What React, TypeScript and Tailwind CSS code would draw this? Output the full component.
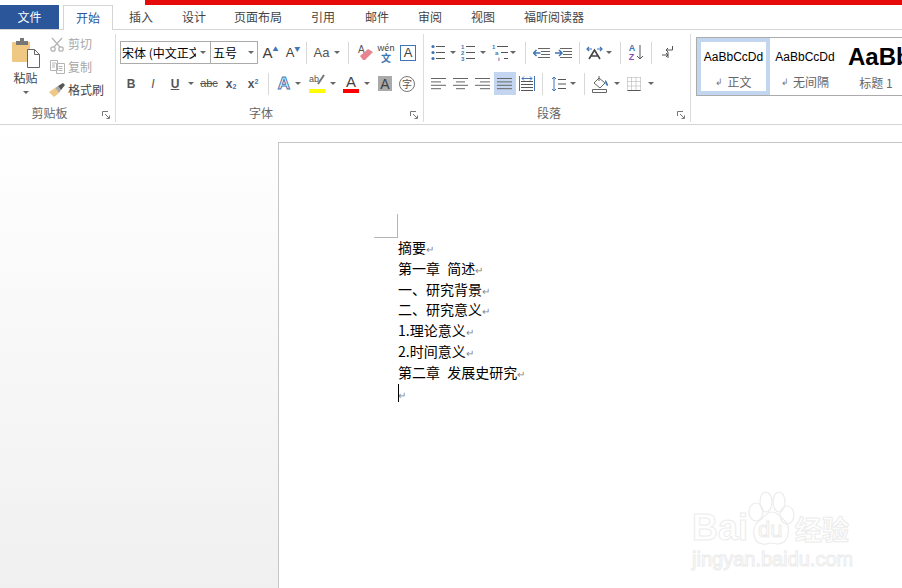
import type { ReactNode } from "react";

const ui = "font-['Noto_Sans_CJK_SC','Liberation_Sans',sans-serif]";
const latin = "font-['Liberation_Sans',sans-serif]";

const tabs = [
  { label: "插入", w: "w-[56px]" },
  { label: "设计", w: "w-[50px]" },
  { label: "页面布局", w: "w-[78px]" },
  { label: "引用", w: "w-[52px]" },
  { label: "邮件", w: "w-[56px]" },
  { label: "审阅", w: "w-[50px]" },
  { label: "视图", w: "w-[56px]" },
  { label: "福昕阅读器", w: "w-[86px]" },
];

const docLines = ["摘要", "第一章  简述", "一、研究背景", "二、研究意义", "1.理论意义", "2.时间意义", "第二章  发展史研究"];

function Caret() {
  return <span className="inline-block h-0 w-0 border-x-[3px] border-t-[3px] border-x-transparent border-t-[#666]" />;
}

function Btn({ w, children, active }: { w: string; children: ReactNode; active?: boolean }) {
  return <div className={`flex h-[23px] shrink-0 items-center justify-center ${w} ${active ? "bg-[#c3d5f0]" : ""}`}>{children}</div>;
}

function CaretBtn({ ml }: { ml: string }) {
  return <Btn w={`w-[6px] ${ml}`}><Caret /></Btn>;
}

function Sep({ className = "" }: { className?: string }) {
  return <div className={`h-[22px] w-px shrink-0 bg-[#d8d8d8] ${className}`} />;
}

function Launcher() {
  return (
    <svg width="8" height="8" viewBox="0 0 8 8" className="absolute bottom-[3px] right-[5px]" fill="none" stroke="#777">
      <path d="M.5 5V.5H6M3 3l4 4M4.5 7.5h3v-3" />
    </svg>
  );
}

function GroupLabel({ w, label, mt }: { w: string; label: string; mt: string }) {
  return <div className={`${w} ${mt} text-center text-[12px] leading-[18px] text-[#666]`}>{label}</div>;
}

function Lines({ rows }: { rows: [number, number][] }) {
  return (
    <svg width="16" height="13" viewBox="0 0 16 13" stroke="#666">
      {rows.map(([a, b], i) => (
        <path key={i} d={`M${a} ${i * 3.4 + 1.5}H${b}`} />
      ))}
    </svg>
  );
}

function ListIcon({ kind }: { kind: "bullet" | "number" | "multi" }) {
  const line = kind === "multi" ? "M5 2.5H16M9 8.5H16M12 14.5H16" : "M5 2.5H14M5 8.5H14M5 14.5H14";
  return (
    <svg width="16" height="17" viewBox="0 0 16 17">
      {kind === "bullet" && (
        <g fill="#3f75b5">
          <circle cx="2" cy="2.5" r="1.6" />
          <circle cx="2" cy="8.5" r="1.6" />
          <circle cx="2" cy="14.5" r="1.6" />
        </g>
      )}
      {kind !== "bullet" && (
        <g fill="#3f75b5" fontSize="6" fontWeight="700" fontFamily="Liberation Sans">
          <text x="0" y="5">1</text>
          <text x={kind === "multi" ? 3 : 0} y="11">{kind === "multi" ? "a" : "2"}</text>
          <text x={kind === "multi" ? 6 : 0} y="17">{kind === "multi" ? "i" : "3"}</text>
        </g>
      )}
      <path d={line} stroke="#555" />
    </svg>
  );
}

function IndentIcon({ flip }: { flip?: boolean }) {
  return (
    <svg width="17" height="12" viewBox="0 0 17 12" fill="none">
      <path d="M5 1.5H17M8 4.5H17M8 7.5H17M5 10.5H17" stroke="#666" />
      <path d={flip ? "M0 6H7M4 3l3 3-3 3" : "M0.5 6H7.5M3.5 3L.5 6l3 3"} stroke="#3f75b5" strokeWidth="1.5" />
    </svg>
  );
}

function Paste() {
  return (
    <svg width="28" height="30" viewBox="0 0 28 30">
      <path d="M1 4h17v20H1a1 1 0 0 1-1-1V5a1 1 0 0 1 1-1z" fill="#efc883" />
      <path d="M4 3h4V0h4v3h4v4H4z" fill="#777" />
      <path d="M15.5 11.5h7l5 5v13h-12z" fill="#fff" stroke="#666" />
      <path d="M22.5 11.5v5h5" fill="none" stroke="#666" />
    </svg>
  );
}

function Brush() {
  return (
    <svg width="16" height="14" viewBox="0 0 16 14">
      <path d="M0 9l6-4 4 5-5 4z" fill="#efc883" />
      <path d="M6 5l3-2 3 4-2 3z" fill="#aaa" />
      <path d="M9 3l5-3 2 2-4 5z" fill="#555" />
    </svg>
  );
}

function Scissors() {
  return (
    <svg width="14" height="15" viewBox="0 0 14 15" fill="none" stroke="#b5b5b5" strokeWidth="1.3">
      <path d="M2 1l8 9M12 1L4 10" />
      <circle cx="3" cy="12" r="2.2" />
      <circle cx="11" cy="12" r="2.2" />
    </svg>
  );
}

function Copy() {
  return (
    <svg width="15" height="14" viewBox="0 0 15 14" fill="#fff" stroke="#b5b5b5">
      <path d="M.5.5h7v10h-7zM6.5 3.5h8v10h-8zM8.5 6.5h4M8.5 8.5h4M8.5 10.5h4M2 3h4M2 5h3M2 7h3" />
    </svg>
  );
}

function Eraser() {
  return (
    <svg width="15" height="17" viewBox="0 0 15 17">
      <text x="0" y="9" fontSize="10" fill="#555" fontFamily="Liberation Sans">A</text>
      <path d="M2 12l8-7 5 3-8 8H5z" fill="#e8848f" />
    </svg>
  );
}

function PaintBucket() {
  return (
    <svg width="17" height="18" viewBox="0 0 17 18" fill="none" stroke="#666">
      <path d="M2 8l5-5 6 5-5 5z" fill="#fff" />
      <path d="M7 1v5" />
      <path d="M13 5c2 1 3 4 3 6-2 0-3-3-3-6z" fill="#3f75b5" stroke="none" />
      <path d="M.5 14.5h14v3H.5z" />
    </svg>
  );
}

function BorderGrid() {
  return (
    <svg width="14" height="14" viewBox="0 0 14 14" fill="none" stroke="#aaa" strokeDasharray="1 1">
      <path d="M.5.5h13M.5 4.5h13M.5 9h13M.5.5v13M4.5.5v13M9 .5v13M13.5.5v13" />
      <path d="M.5 13.5h13" strokeDasharray="none" stroke="#555" />
    </svg>
  );
}

function TextDirection() {
  return (
    <svg width="17" height="14" viewBox="0 0 17 14" fill="none">
      <path d="M3 13L8.5 4 14 13M5 10h7" stroke="#444" strokeWidth="1.6" />
      <path d="M1 3h5M3 1L1 3l2 2M16 3h-5M14 1l2 2-2 2" stroke="#3f75b5" strokeWidth="1.2" />
    </svg>
  );
}

function Pilcrow() {
  return (
    <svg width="11" height="13" viewBox="0 0 11 13" fill="none" stroke="#555">
      <path d="M10.5 0v4H4M6 2L4 4l2 2" />
      <path d="M0 9h6M4 7l2 2-2 2M6 6v6" />
    </svg>
  );
}

function Row({ children, className = "" }: { children: ReactNode; className?: string }) {
  return <div className={`flex h-[23px] items-center ${className}`}>{children}</div>;
}

function BigA({ color = "#3f3f3f", size = "text-[15px]" }: { color?: string; size?: string }) {
  return <span className={`${size} leading-none ${latin}`} style={{ color }}>A</span>;
}

function StyleCard({ sample, name, mark, selected, w, left }: { sample: ReactNode; name: string; mark?: boolean; selected?: boolean; w: string; left?: boolean }) {
  return (
    <div className={`flex h-full shrink-0 flex-col items-center overflow-hidden border-[4px] ${w} ${selected ? "border-[#c3d6f0]" : "border-transparent"}`}>
      <div className={`flex h-[30px] items-center ${left ? "ml-[4px] self-start" : ""}`}>{sample}</div>
      <div className="mt-[2px] flex items-center whitespace-nowrap text-[12px] leading-[18px] text-[#666]">
        {mark && <span className="mr-[4px] text-[9px] text-[#777]">↲</span>}
        {name}
      </div>
    </div>
  );
}

export default function App() {
  return (
    <div className={`relative flex h-[588px] w-[902px] flex-col overflow-hidden bg-white ${ui}`}>
      {/* Title strip */}
      <div className="ml-[145px] h-[5px] shrink-0 bg-[#e60a0a]" />

      {/* Tabs */}
      <div className="relative flex h-[25px] shrink-0 items-stretch border-b border-[#d4d4d4] text-[12px] text-[#444]">
        <div className="flex w-[59px] items-center justify-center bg-[#2b579a] text-white">文件</div>
        <div className="z-10 mb-[-1px] ml-[4px] flex w-[50px] items-center justify-center border border-b-0 border-[#d4d4d4] bg-white text-[#2b579a]">开始</div>
        {tabs.map((t) => (
          <div key={t.label} className={`flex items-center justify-center ${t.w}`}>{t.label}</div>
        ))}
      </div>

      {/* Ribbon */}
      <div className="flex h-[95px] shrink-0 border-b border-[#d4d4d4] pb-[2px] pt-[4px]">
        {/* Clipboard */}
        <section className="relative flex w-[116px] shrink-0 flex-col border-r border-[#dcdcdc]">
          <div className="flex h-[70px]">
            <div className="flex w-[48px] flex-col items-center pl-[3px] pt-[4px]">
              <Paste />
              <span className="mt-[2px] text-[12px] leading-[16px] text-[#444]">粘贴</span>
              <span className="mt-[5px] flex"><Caret /></span>
            </div>
            <div className="mt-[-1px] flex flex-col gap-[1px] pl-[1px] text-[12px] text-[#444]">
              <div className="flex h-[22px] items-center gap-[3px] text-[#a8a8a8]"><span className="flex w-[16px] justify-center"><Scissors /></span>剪切</div>
              <div className="flex h-[22px] items-center gap-[3px] text-[#a8a8a8]"><span className="flex w-[16px] justify-center"><Copy /></span>复制</div>
              <div className="flex h-[22px] items-center gap-[3px]"><span className="flex w-[16px] justify-center"><Brush /></span>格式刷</div>
            </div>
          </div>
          <GroupLabel w="w-[99px]" mt="" label="剪贴板" />
          <Launcher />
        </section>

        {/* Font */}
        <section className="relative flex w-[308px] shrink-0 flex-col border-r border-[#dcdcdc] pl-[4px] pt-[7px]">
          <Row>
            <div className="flex h-[23px] w-[91px] shrink-0 items-center justify-between border border-[#ababab] pl-[1px] pr-[4px] text-[12px] text-black">
              <span className="w-[74px] overflow-hidden whitespace-nowrap">宋体 (中文正文)</span>
              <Caret />
            </div>
            <div className="flex h-[23px] w-[47px] shrink-0 items-center justify-between border border-l-0 border-[#ababab] pl-[2px] pr-[3px] text-[12px] text-black">
              五号 <Caret />
            </div>
            <Btn w="w-[23px] ml-[1px]"><BigA /><span className="mb-[8px] text-[6px] leading-none text-[#3f75b5]">▲</span></Btn>
            <Btn w="w-[22px]"><BigA size="text-[13px]" /><span className="mb-[8px] text-[6px] leading-none text-[#3f75b5]">▼</span></Btn>
            <Sep className="ml-[2px]" />
            <Btn w="w-[23px] ml-[3px]"><span className={`text-[13px] leading-none text-[#555] ${latin}`}>Aa</span></Btn>
            <CaretBtn ml="ml-[1px]" />
            <Sep className="ml-[8px]" />
            <Btn w="w-[22px] ml-[5px]"><Eraser /></Btn>
            <Btn w="w-[20px]">
              <div className="flex flex-col items-center gap-[1px]">
                <span className="text-[9px] leading-[9px] text-[#444]">wén</span>
                <span className="text-[10px] font-bold leading-[10px] text-[#3f75b5]">文</span>
              </div>
            </Btn>
            <Btn w="w-[22px] ml-[1px]">
              <div className="flex h-[16px] w-[16px] items-center justify-center border border-[#3f75b5]"><BigA size="text-[13px]" /></div>
            </Btn>
          </Row>
          <Row className={`mt-[8px] text-[#555] ${latin}`}>
            <Btn w="w-[22px]"><span className="text-[12px] font-bold">B</span></Btn>
            <Btn w="w-[22px]"><span className="text-[12px] italic">I</span></Btn>
            <Btn w="w-[22px]"><span className="text-[12px] font-bold underline">U</span></Btn>
            <CaretBtn ml="ml-[2px]" />
            <Btn w="w-[22px] ml-[4px]"><span className="text-[11px] line-through">abc</span></Btn>
            <Btn w="w-[22px]"><span className="text-[12px] font-bold">x<sub className="text-[7px] text-[#3f75b5]">2</sub></span></Btn>
            <Btn w="w-[22px]"><span className="text-[12px] font-bold">x<sup className="text-[7px] text-[#3f75b5]">2</sup></span></Btn>
            <Sep className="ml-[4px]" />
            <Btn w="w-[22px] ml-[4px]"><span className="text-[17px] font-bold text-white [-webkit-text-stroke:1px_#3f75b5]">A</span></Btn>
            <CaretBtn ml="" />
            <Btn w="w-[22px] ml-[5px]">
              <div className="relative flex h-[19px] w-[16px] items-start border-b-[4px] border-[#ffff00] text-[9px] leading-[10px] text-[#555]">
                ab
                <svg width="9" height="12" viewBox="0 0 9 12" className="absolute right-0 top-0" stroke="#777" strokeWidth="2"><path d="M8 1L2 10" /></svg>
              </div>
            </Btn>
            <CaretBtn ml="ml-[2px]" />
            <Btn w="w-[22px] ml-[4px]">
              <div className="flex h-[19px] w-[16px] items-center justify-center border-b-[4px] border-[#ff0000]"><BigA /></div>
            </Btn>
            <CaretBtn ml="ml-[2px]" />
            <Btn w="w-[22px] ml-[4px]">
              <div className="flex h-[15px] w-[14px] items-center justify-center bg-[#aaaaaa]"><BigA size="text-[14px]" /></div>
            </Btn>
            <Btn w="w-[22px]">
              <div className={`flex h-[16px] w-[16px] items-center justify-center rounded-full border border-[#777] text-[10px] leading-none ${ui}`}>字</div>
            </Btn>
          </Row>
          <GroupLabel w="w-[282px]" mt="mt-[9px]" label="字体" />
          <Launcher />
        </section>

        {/* Paragraph */}
        <section className="relative flex w-[267px] shrink-0 flex-col border-r border-[#dcdcdc] pl-[4px] pt-[7px]">
          <Row>
            <Btn w="w-[22px]"><ListIcon kind="bullet" /></Btn>
            <CaretBtn ml="" />
            <Btn w="w-[22px] ml-[2px]"><ListIcon kind="number" /></Btn>
            <CaretBtn ml="" />
            <Btn w="w-[21px] ml-[3px]"><ListIcon kind="multi" /></Btn>
            <CaretBtn ml="" />
            <Sep className="ml-[9px]" />
            <Btn w="w-[22px] ml-[4px]"><IndentIcon /></Btn>
            <Btn w="w-[22px]"><IndentIcon flip /></Btn>
            <Sep className="ml-[5px]" />
            <Btn w="w-[23px] ml-[3px]"><TextDirection /></Btn>
            <CaretBtn ml="" />
            <Sep className="ml-[8px]" />
            <Btn w="w-[23px] ml-[4px]">
              <div className={`flex flex-col text-[9px] font-bold leading-[9px] ${latin}`}>
                <span className="text-[#3f75b5]">A</span>
                <span className="text-[#8a4fb5]">Z</span>
              </div>
              <svg width="8" height="15" viewBox="0 0 8 15" fill="none" stroke="#555" className="ml-[1px]"><path d="M4 0v14M1 11l3 3 3-3" /></svg>
            </Btn>
            <Sep className="ml-[3px]" />
            <Btn w="w-[22px] ml-[4px]"><Pilcrow /></Btn>
          </Row>
          <Row className="mt-[8px]">
            <Btn w="w-[22px]"><Lines rows={[[0, 15], [0, 10], [0, 15], [0, 10]]} /></Btn>
            <Btn w="w-[22px]"><Lines rows={[[0, 15], [3, 12], [0, 15], [3, 12]]} /></Btn>
            <Btn w="w-[22px]"><Lines rows={[[0, 15], [5, 15], [0, 15], [5, 15]]} /></Btn>
            <Btn w="w-[22px]" active><Lines rows={[[0, 15], [0, 15], [0, 15], [0, 15]]} /></Btn>
            <Btn w="w-[22px]">
              <svg width="16" height="15" viewBox="0 0 16 15" fill="none">
                <path d="M2 5.5h12M2 8.5h12M2 11.5h12M2 14.5h12" stroke="#555" />
                <path d="M.5 0v15M15.5 0v15M3 2.5h10M5 .5L3 2.5l2 2M11 .5l2 2-2 2" stroke="#3f75b5" />
              </svg>
            </Btn>
            <Sep className="ml-[4px]" />
            <Btn w="w-[22px] ml-[4px]">
              <svg width="15" height="16" viewBox="0 0 15 16" fill="none">
                <path d="M3 1v14M1 3l2-2 2 2M1 13l2 2 2-2" stroke="#3f75b5" />
                <path d="M7 3.5h8M7 8h8M7 12.5h8" stroke="#555" />
              </svg>
            </Btn>
            <CaretBtn ml="ml-[1px]" />
            <Sep className="ml-[8px]" />
            <Btn w="w-[22px] ml-[4px]"><PaintBucket /></Btn>
            <CaretBtn ml="ml-[3px]" />
            <Btn w="w-[22px] ml-[3px]"><BorderGrid /></Btn>
            <CaretBtn ml="ml-[3px]" />
          </Row>
          <GroupLabel w="w-[242px]" mt="mt-[9px]" label="段落" />
          <Launcher />
        </section>

        {/* Styles */}
        <section className="ml-[5px] mt-[3px] flex h-[59px] min-w-0 flex-1 border-y border-l border-[#ababab]">
          <StyleCard w="w-[73px]" selected mark name="正文" sample={<span className={`whitespace-nowrap text-[12px] text-black ${latin}`}>AaBbCcDd</span>} />
          <StyleCard w="w-[70px]" mark name="无间隔" sample={<span className={`whitespace-nowrap text-[12px] text-black ${latin}`}>AaBbCcDd</span>} />
          <StyleCard w="w-[72px]" left name="标题 1" sample={<span className={`whitespace-nowrap text-[24px] font-bold text-black ${latin}`}>AaBb</span>} />
        </section>
      </div>

      {/* Document area */}
      <div className="flex min-h-0 flex-1 bg-gradient-to-b from-white to-[#f0f0f0] pl-[278px] pt-[17px]">
        <div className="flex-1 border-l border-t border-[#c6c6c6] bg-white pl-[119px] pt-[71px]">
          {/* Margin crop mark */}
          <div className="ml-[-24px] h-[24px] w-[24px] border-b border-r border-[#b5b5b5]" />
          <div className="mt-[-1px] text-[14px] leading-[20.8px] text-black [word-spacing:0.5px]">
            {docLines.map((line) => (
              <div key={line} className="h-[20.8px] whitespace-pre">
                {line}
                <span className="text-[10px] leading-none text-[#888]">↵</span>
              </div>
            ))}
            <div className="relative h-[20.8px]">
              <span className="absolute left-0 top-[1px] h-[18px] w-px bg-black" />
              <span className="text-[10px] leading-none text-[#888]">↵</span>
            </div>
          </div>
        </div>
      </div>

      {/* Watermark */}
      <div className="pointer-events-none absolute left-[692px] top-[490px] h-[90px] w-[175px]">
        <svg width="48" height="58" viewBox="0 0 48 58" className="absolute left-[56px] top-0" fill="none" stroke="#ececec" strokeWidth="1.2">
          <ellipse cx="8" cy="22" rx="7" ry="9" />
          <ellipse cx="18" cy="12" rx="6" ry="10" />
          <ellipse cx="31" cy="12" rx="6" ry="10" />
          <ellipse cx="39" cy="25" rx="7" ry="9" />
          <path d="M24 22c5 0 8 4 12 8 7 6 6 23-6 24-3 0-4-1-7-1s-5 2-8 1C4 53 3 37 11 31c5-3 7-9 13-9z" />
        </svg>
        <span className={`absolute left-0 top-[20px] text-[36px] font-bold leading-none text-white [-webkit-text-stroke:1px_#ececec] ${latin}`}>Bai</span>
        <span className={`absolute left-[66px] top-[29px] text-[22px] leading-none text-white [-webkit-text-stroke:1px_#ececec] ${latin}`}>du</span>
        <span className="absolute left-[103px] top-[25px] text-[27px] font-bold leading-none text-white [-webkit-text-stroke:1px_#ececec]">经验</span>
        <span className={`absolute left-0 top-[59px] whitespace-nowrap text-[20px] leading-none text-white [-webkit-text-stroke:1px_#ececec] ${latin}`}>jingyan.baidu.com</span>
      </div>
    </div>
  );
}
